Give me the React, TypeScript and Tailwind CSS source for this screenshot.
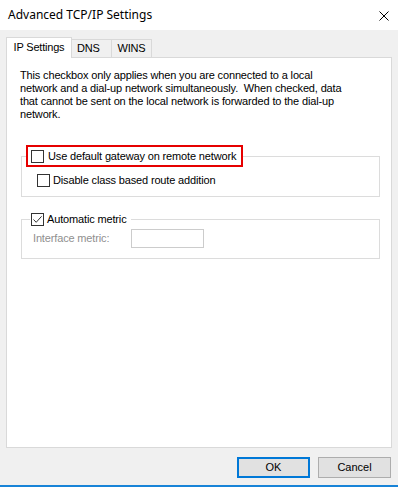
import React from 'react';

const FONT = { fontFamily: '"Liberation Sans", Arial, sans-serif' };

const Check: React.FC<{ checked?: boolean }> = ({ checked }) => (
  <span className="flex h-[13px] w-[13px] shrink-0 items-center justify-center border border-[#333333] bg-white">
    {checked && (
      <svg width="11" height="11" viewBox="0 0 11 11">
        <path d="M1.5 5.5 L4.2 8.3 L9.6 2.3" fill="none" stroke="#333333" strokeWidth="1" />
      </svg>
    )}
  </span>
);

export default function App() {
  return (
    <div className="flex h-[487px] w-[398px] flex-col bg-[#f0f0f0] text-black" style={FONT}>
      {/* Title bar */}
      <div className="flex h-[30px] shrink-0 items-center justify-between bg-white pl-[8px] pr-[9px]">
        <span className="text-[12px] leading-none" style={{ fontFamily: '"Noto Sans", "Liberation Sans", sans-serif' }}>
          Advanced TCP/IP Settings
        </span>
        <svg width="10" height="10" viewBox="0 0 10 10" className="mt-px">
          <path d="M0.5 0.5 L9.5 9.5 M9.5 0.5 L0.5 9.5" stroke="#000" strokeWidth="1" />
        </svg>
      </div>

      <div className="flex flex-col px-[6px] pt-[7px]">
        {/* Tabs */}
        <div className="flex h-[20px] items-end text-[11px] tracking-[-0.2px]">
          <div className="relative z-10 -mb-px flex h-[21px] w-[66px] items-center justify-center border border-b-0 border-[#d9d9d9] bg-white pb-[2px]">
            IP Settings
          </div>
          <div className="flex h-[18px] w-[40px] items-center border border-b-0 border-l-0 border-[#d9d9d9] pl-[5px]">
            DNS
          </div>
          <div className="flex h-[18px] w-[40px] items-center justify-center border border-b-0 border-l-0 border-[#d9d9d9]">
            WINS
          </div>
        </div>

        {/* Panel */}
        <div className="flex h-[391px] flex-col border border-[#d9d9d9] bg-white px-[13px] pt-[11px] text-[11px] tracking-[-0.15px]">
          <p className="whitespace-pre leading-[13px]">
            {'This checkbox only applies when you are connected to a local\nnetwork and a dial-up network simultaneously.  When checked, data\nthat cannot be sent on the local network is forwarded to the dial-up\nnetwork.'}
          </p>

          <fieldset className="ml-px mr-[-2px] mt-[24px] border border-[#dcdcdc]">
            <legend className="ml-[4px]">
              <div className="flex h-[22px] items-center gap-[4px] border-2 border-[#e60000] pl-[3px] pr-[5px]">
                <Check />
                <span className="leading-[13px]">Use default gateway on remote network</span>
              </div>
            </legend>
            <div className="flex items-center gap-[3px] pb-[9px] pl-[15px] pt-[7px]">
              <Check />
              <span className="leading-[13px]">Disable class based route addition</span>
            </div>
          </fieldset>

          <fieldset className="ml-px mr-[-2px] mt-[15px] border border-[#dcdcdc]">
            <legend className="ml-[8px]">
              <div className="flex h-[14px] items-center gap-[3px] px-px pr-[4px]">
                <Check checked />
                <span className="leading-[13px]">Automatic metric</span>
              </div>
            </legend>
            <div className="flex items-center pb-[10px] pl-[11px] pt-[3px] text-[#8f8f8f]">
              <span className="w-[98px] leading-[13px]">Interface metric:</span>
              <div className="h-[19px] w-[73px] border border-[#cccccc] bg-white" />
            </div>
          </fieldset>
        </div>
      </div>

      {/* Buttons */}
      <div className="mt-[9px] flex justify-end gap-[8px] pr-[7px] text-[11px]">
        <button className="flex h-[21px] w-[73px] items-center justify-center border-2 border-[#0078d7] bg-[#e1e1e1]">
          OK
        </button>
        <button className="flex h-[21px] w-[73px] items-center justify-center border border-[#adadad] bg-[#e1e1e1]">
          Cancel
        </button>
      </div>

      <div className="mt-auto h-[2px] bg-[#1883d7]" />
    </div>
  );
}
